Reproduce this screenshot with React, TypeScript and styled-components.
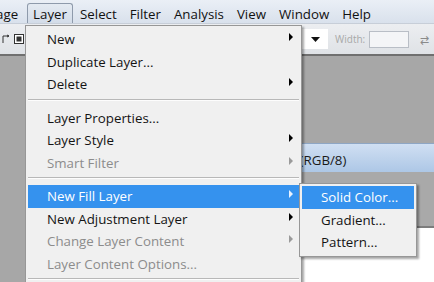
import React from "react";
import styled, { createGlobalStyle } from "styled-components";

const Global = createGlobalStyle`
  html, body { margin: 0; padding: 0; }
  body {
    width: 434px;
    height: 282px;
    overflow: hidden;
    font-family: "Open Sans", "Noto Sans", sans-serif;
    background: #a7a7a7;
  }
`;

const Screen = styled.div`
  position: relative;
  width: 434px;
  height: 282px;
  overflow: hidden;
  display: flex;
  flex-direction: column;
`;

const MenuBar = styled.div`
  height: 24px;
  flex: 0 0 24px;
  display: flex;
  align-items: stretch;
  overflow: hidden;
  background: linear-gradient(#eaeff6, #d9e1ec);
  border-bottom: 1px solid #c7ced8;
  box-sizing: border-box;
`;

const BarItem = styled.div<{ $open?: boolean; $shift?: number }>`
  display: flex;
  align-items: center;
  padding: 0 5px;
  margin-left: ${(p) => p.$shift ?? 1}px;
  margin-top: 3px;
  font-size: 13.3px;
  color: #111;
  border: 1px solid ${(p) => (p.$open ? "#8e9aab" : "transparent")};
  border-bottom: none;
  border-radius: 3px 3px 0 0;
  background: ${(p) => (p.$open ? "linear-gradient(#e4eaf2, #d3dce8)" : "transparent")};
`;

const Toolbar = styled.div`
  height: 32px;
  flex: 0 0 32px;
  display: flex;
  align-items: center;
  background: linear-gradient(#eceef1, #dfe2e6);
  border-bottom: 2px solid #6f6f6f;
  box-sizing: border-box;
  padding-left: 2px;
  gap: 4px;
`;

const ToolIcon = styled.svg`
  flex: none;
`;

const ToolSpacer = styled.div`
  flex: 0 0 270px;
`;

const Select = styled.div`
  width: 26px;
  height: 20px;
  background: #fff;
  display: flex;
  align-items: center;
  justify-content: center;
  flex: none;
`;

const Label = styled.span`
  font-size: 10px;
  color: #a8a8a8;
  margin-left: 3px;
`;

const Field = styled.div`
  width: 38px;
  height: 15px;
  border: 1px solid #b9bec6;
  background: #f4f5f7;
  flex: none;
`;

const Swap = styled.span`
  font-size: 11px;
  color: #8a8a8a;
  margin-left: 7px;
`;

const Workspace = styled.div`
  flex: 1;
  background: #a7a7a7;
  padding: 87px 0 0 40px;
  display: flex;
  flex-direction: column;
`;

const DocTitle = styled.div`
  height: 29px;
  flex: none;
  background: linear-gradient(#d0dff2, #adc7e6);
  border-top: 1px solid #8ea6c4;
  box-sizing: border-box;
  display: flex;
  align-items: center;
  padding: 4px 0 0 142px;
  font-size: 13.3px;
  color: #1a1a1a;
  white-space: nowrap;
`;

const Pasteboard = styled.div`
  height: 54px;
  flex: none;
  background: #a9a9a9;
  border-bottom: 2px solid #7d7d7d;
`;

const Canvas = styled.div`
  flex: 1;
  background: #fff;
`;

const Menu = styled.div<{ $left: number; $top: number; $width: number }>`
  position: absolute;
  left: ${(p) => p.$left}px;
  top: ${(p) => p.$top}px;
  width: ${(p) => p.$width}px;
  background: #f0f0f0;
  border: 1px solid #979797;
  box-shadow: 2px 2px 2px rgba(0, 0, 0, 0.35);
  padding: 2px;
  box-sizing: border-box;
`;

const Item = styled.div<{ $active?: boolean; $disabled?: boolean }>`
  position: relative;
  height: 22.5px;
  display: flex;
  align-items: center;
  padding-left: 19px;
  font-size: 13.3px;
  white-space: nowrap;
  color: ${(p) => (p.$active ? "#fff" : p.$disabled ? "#8c8c8c" : "#141414")};
  background: ${(p) => (p.$active ? "#3592ee" : "transparent")};
`;

const Arrow = styled.svg`
  position: absolute;
  right: 6px;
  top: 5px;
`;

const Separator = styled.div`
  height: 11px;
  display: flex;
  flex-direction: column;
  padding-top: 3px;
  box-sizing: border-box;
  &::before {
    content: "";
    height: 1px;
    background: #b8b8b8;
  }
  &::after {
    content: "";
    height: 1px;
    background: #fdfdfd;
  }
`;

type Entry =
  | { sep: true }
  | { label: string; sub?: boolean; active?: boolean; disabled?: boolean; sep?: false };

const layerMenu: Entry[] = [
  { label: "New", sub: true },
  { label: "Duplicate Layer..." },
  { label: "Delete", sub: true },
  { sep: true },
  { label: "Layer Properties..." },
  { label: "Layer Style", sub: true },
  { label: "Smart Filter", sub: true, disabled: true },
  { sep: true },
  { label: "New Fill Layer", sub: true, active: true },
  { label: "New Adjustment Layer", sub: true },
  { label: "Change Layer Content", sub: true, disabled: true },
  { label: "Layer Content Options...", disabled: true },
  { sep: true },
];

const fillMenu: Entry[] = [
  { label: "Solid Color...", active: true },
  { label: "Gradient..." },
  { label: "Pattern..." },
];

function SubArrow({ color }: { color: string }) {
  return (
    <Arrow width="4" height="8" viewBox="0 0 4 8">
      <polygon points="0,0 4,4 0,8" fill={color} />
    </Arrow>
  );
}

function MenuList({ items }: { items: Entry[] }) {
  return (
    <>
      {items.map((it, i) =>
        it.sep ? (
          <Separator key={i} />
        ) : (
          <Item key={i} $active={it.active} $disabled={it.disabled}>
            {it.label}
            {it.sub && (
              <SubArrow color={it.active ? "#e8f2ff" : it.disabled ? "#9a9a9a" : "#000"} />
            )}
          </Item>
        )
      )}
    </>
  );
}

export default function App() {
  return (
    <Screen>
      <Global />
      <MenuBar>
        <BarItem $shift={-26}>Image</BarItem>
        <BarItem $open $shift={3}>Layer</BarItem>
        <BarItem>Select</BarItem>
        <BarItem>Filter</BarItem>
        <BarItem>Analysis</BarItem>
        <BarItem>View</BarItem>
        <BarItem>Window</BarItem>
        <BarItem>Help</BarItem>
      </MenuBar>
      <Toolbar>
        <ToolIcon width="8" height="10" viewBox="0 0 8 10">
          <path d="M1 9V2h6" stroke="#333" fill="none" />
          <path d="M5 1l2 1-2 1" stroke="#333" fill="none" />
        </ToolIcon>
        <ToolIcon width="10" height="10" viewBox="0 0 10 10">
          <rect x="0.5" y="0.5" width="9" height="9" fill="#fff" stroke="#333" />
          <rect x="2.5" y="2.5" width="5" height="5" fill="#333" />
        </ToolIcon>
        <ToolSpacer />
        <Select>
          <svg width="9" height="5" viewBox="0 0 9 5">
            <polygon points="0,0 9,0 4.5,5" fill="#111" />
          </svg>
        </Select>
        <Label>Width:</Label>
        <Field />
        <Swap>⇄</Swap>
      </Toolbar>
      <Workspace>
        <DocTitle>Untitled-1 @ 100% (RGB/8)</DocTitle>
        <Pasteboard />
        <Canvas />
      </Workspace>

      <Menu $left={25} $top={25} $width={277}>
        <MenuList items={layerMenu} />
      </Menu>
      <Menu $left={299} $top={183} $width={118}>
        <MenuList items={fillMenu} />
      </Menu>
    </Screen>
  );
}
